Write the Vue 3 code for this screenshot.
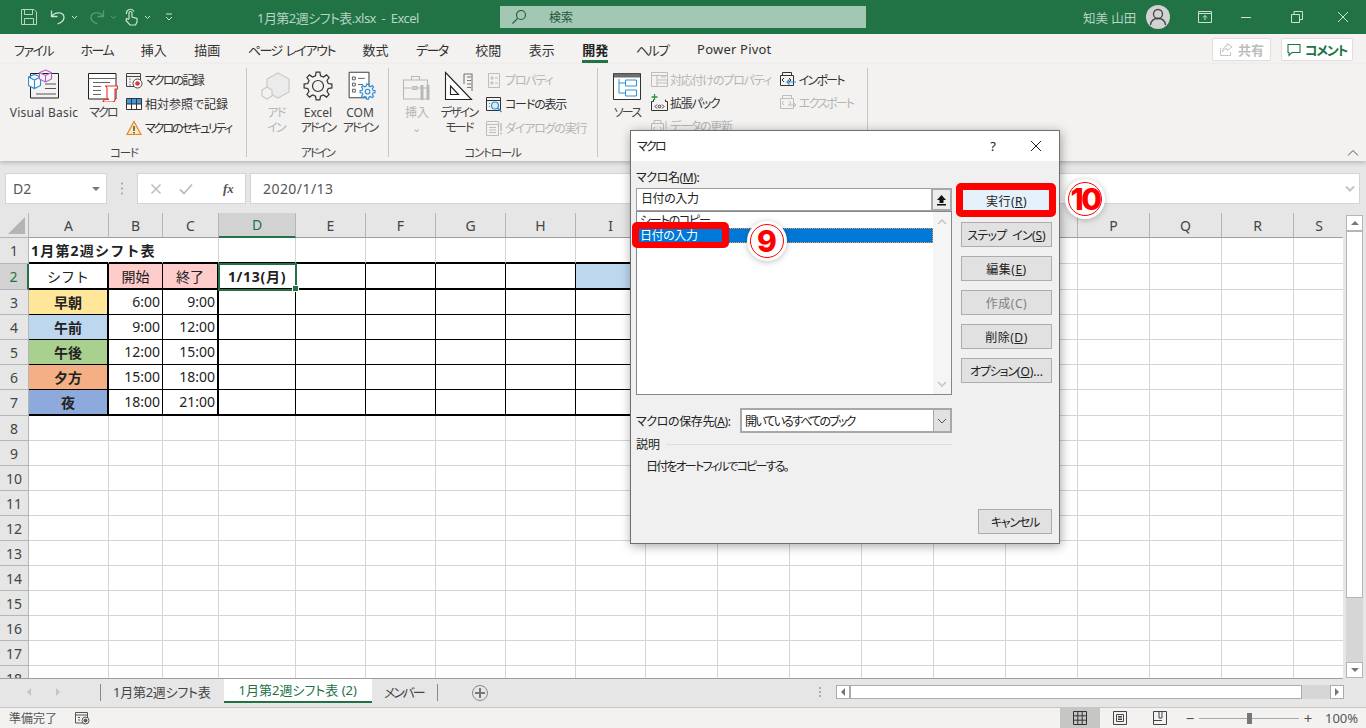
<template>
  <div class="app">
    <!-- title bar -->
    <header class="titlebar">
      <div class="qat">
        <svg class="ic-save" width="18" height="18" viewBox="0 0 18 18" fill="none" stroke="#b9d5c5"><path d="M1.500 1.500h12.500l2.500 2.500v12.500h-15z" /><path d="M4.500 1.500v5h8v-5M4.500 16.500v-6h9v6" /></svg>
        <svg class="ic-undo" width="16" height="18" viewBox="0 0 16 18" fill="none" stroke="#cfe2d7" stroke-width="1.300"><path d="M1.500 2.500v6h6M2 8C5 3.500 14 3.500 14 9.500c0 3-2.500 5-6.500 6.500" /></svg>
        <svg class="caret" width="7" height="5" viewBox="0 0 7 5" fill="none" stroke="#cfe2d7"><path d="M1 1l2.500 2.500L6 1" /></svg>
        <svg class="ic-redo" width="16" height="18" viewBox="0 0 16 18" fill="none" stroke="#5b9a78" stroke-width="1.300"><path d="M14.500 2.500v6h-6M14 8C11 3.500 2 3.500 2 9.500c0 3 2.500 5 6.500 6.500" /></svg>
        <svg class="caret" width="7" height="5" viewBox="0 0 7 5" fill="none" stroke="#5b9a78"><path d="M1 1l2.500 2.500L6 1" /></svg>
        <svg class="ic-touch" width="15" height="18" viewBox="0 0 15 18" fill="none" stroke="#cfe2d7" stroke-width="1.200"><path d="M5 11V5a1.500 1.500 0 0 1 3 0v4l5 1.500V14l-1.500 3H6L2 12.500l.5-2L5 11.500" /><path d="M2.500 6a4 4 0 0 1 7.500-2.500" /></svg>
        <svg class="caret" width="7" height="5" viewBox="0 0 7 5" fill="none" stroke="#cfe2d7"><path d="M1 1l2.500 2.500L6 1" /></svg>
        <svg class="ic-more" width="8" height="9" viewBox="0 0 8 9" fill="none" stroke="#cfe2d7"><path d="M1 1h6M1 4l3 3 3-3" /></svg>
      </div>
      <div class="doc-title">1月第2週シフト表.xlsx&nbsp; - &nbsp;Excel</div>
      <div class="search">
        <svg width="16" height="16" viewBox="0 0 16 16" fill="none" stroke="#24563b" stroke-width="1.100"><circle cx="10" cy="6" r="4.500" /><path d="M6.700 9.300L1.500 14.500" /></svg>
        <span>検索</span>
      </div>
      <div class="user">知美 山田</div>
      <div class="avatar">
        <svg width="24" height="24" viewBox="0 0 24 24" fill="none" stroke="#444" stroke-width="1.300"><circle cx="12" cy="9" r="4.500" /><path d="M4.500 20c.5-4.500 3.500-6.500 7.500-6.500s7 2 7.500 6.500" /></svg>
      </div>
      <svg class="win w1" width="14" height="12" viewBox="0 0 14 12" fill="none" stroke="#cfe2d7"><path d="M.5 2.500V.5h13v2zM.5 2.500v9h13v-9M7 9V4.500M5 6.500l2-2 2 2" /></svg>
      <svg class="win w2" width="12" height="12" viewBox="0 0 12 12" fill="none" stroke="#cfe2d7"><path d="M1 6.500h10" /></svg>
      <svg class="win w3" width="12" height="12" viewBox="0 0 12 12" fill="none" stroke="#cfe2d7"><path d="M.5 3.500h8v8h-8zM3 3.500v-3h8.500v8h-3" /></svg>
      <svg class="win w4" width="12" height="12" viewBox="0 0 12 12" fill="none" stroke="#cfe2d7"><path d="M1 1l10 10M11 1L1 11" /></svg>
    </header>

    <!-- ribbon tabs -->
    <nav class="tabs">
      <span
        v-for="t in tabs"
        :key="t"
        class="tab"
        :class="{ on: t === '開発', kana: isKana(t), latin: t === 'Power Pivot' }"
      >{{ t }}</span>
      <div class="tab-right">
        <button class="pill share">
          <svg width="15" height="15" viewBox="0 0 15 15" fill="none" stroke="#c4c4c4"><path d="M1.500 6v7.500h10V10M8 1.500l5 3.500-5 3.500V6.500C5.500 6.500 4 8 3.500 10c0-3.500 1.500-5.500 4.500-6z" /></svg>
          共有
        </button>
        <button class="pill comment">
          <svg width="14" height="14" viewBox="0 0 14 14" fill="none" stroke="#217346" stroke-width="1.100"><path d="M1 1.500h12v8H5l-3 3v-3H1z" /></svg>
          <span class="k1">コメント</span>
        </button>
      </div>
    </nav>

    <!-- ribbon -->
    <section class="ribbon">
      <div class="group g-code">
        <div class="gbody">
          <div class="big vb">
            <svg width="32" height="34" viewBox="0 0 32 34" fill="none">
              <path d="M2.500 5.500h28v24.500h-28z" fill="#f3f2f1" stroke="#222" />
              <path d="M17 16h11M17 20.500h11M8 26h20" stroke="#555" />
              <path d="M6.500 6.500l6 2.500v8.500l-6 3-6-3V9zM.5 9l6 3 6-3M6.500 12v8.500" fill="#fff" stroke="#2e8fd8" stroke-width="1.200" />
              <path d="M17.500 2l6 2.500V11l-6 3-6-3V4.500zM11.500 4.500l6 3 6-3M17.500 7.500V14" fill="#f3f2f1" stroke="#b25dc6" stroke-width="1.100" />
            </svg>
            <span>Visual Basic</span>
          </div>
          <div class="big macro">
            <svg width="30" height="34" viewBox="0 0 30 34" fill="none">
              <path d="M.5 5.500h27.500v25.500H.5z" fill="#fff" stroke="#222" />
              <path d="M.5 10.500h27.500M5 14.500h17M5 18.500h8M5 22.500h8M5 26.500h8" stroke="#666" />
              <path d="M17 18h12.500v3H27v10.500c0 1.500-1 2.500-2.500 2.500H14.500c1-.5 1.500-1.500 1.500-2.500h5M17 18c1.500 0 2 1.500 2 3v10" fill="#fff" stroke="#e8322f" stroke-width="1.100" />
            </svg>
            <span class="k2">マクロ</span>
          </div>
          <div class="smalls s-code">
            <div class="small">
              <svg width="17" height="17" viewBox="0 0 17 17" fill="none"><path d="M.5 1.500h14v13H.5zM.5 4.500h14" stroke="#444" /><path d="M3 7h2M3 10h2M3 13h2" stroke="#888" /><circle cx="11.500" cy="11.500" r="4.500" fill="#fff" stroke="#444" /><circle cx="11.500" cy="11.500" r="2.300" fill="#e8322f" /></svg>
              <span class="k2">マクロの記録</span>
            </div>
            <div class="small">
              <svg width="17" height="16" viewBox="0 0 17 16" fill="none"><path d="M.5 2.500h15v11H.5z" fill="#fff" stroke="#333" /><path d="M1 3h14v5H1z" fill="#3f97dc" /><path d="M5.500 2.500v11M10.500 2.500v11M.5 8h15" stroke="#333" /></svg>
              <span>相対参照で記録</span>
            </div>
            <div class="small">
              <svg width="17" height="16" viewBox="0 0 17 16" fill="none"><path d="M8 1.500l7 13H1z" fill="#fbe7c4" stroke="#e08a1e" stroke-width="1.200" /><path d="M8 6v5M8 12v1.500" stroke="#333" stroke-width="1.300" /></svg>
              <span class="k3">マクロのセキュリティ</span>
            </div>
          </div>
        </div>
        <div class="glabel k1">コード</div>
      </div>

      <div class="group g-addin">
        <div class="gbody">
          <div class="big dis w42">
            <svg width="30" height="34" viewBox="0 0 30 34" fill="none" stroke="#c8c8c8" stroke-width="1.200"><path d="M17 5l11 6v13l-11 6-11-6V11z" fill="#ebebeb" /><path d="M6 19l5 3v6l-5 3-5-3v-6z" fill="#f3f2f1" /></svg>
            <span class="k2">アド<br />イン</span>
          </div>
          <div class="big w42">
            <svg width="30" height="34" viewBox="0 0 30 34" fill="none" stroke="#333" stroke-width="1.200"><path :d="gear(15, 18, 14, 10.500, 8)" /><circle cx="15" cy="18" r="5.500" /></svg>
            <span>Excel<br /><em class="k2">アドイン</em></span>
          </div>
          <div class="big w42">
            <svg width="32" height="36" viewBox="0 0 32 36" fill="none">
              <path d="M4.500 4.500h21v27h-21z" fill="#fff" stroke="#333" />
              <path d="M8 9.500h3v3H8zM8 16h3v3H8zM8 22.500h3v3H8z" stroke="#555" />
              <path d="M14 11h7M14 17.500h5" stroke="#555" />
              <path :d="gear(24, 25, 8, 6, 8)" fill="#f3f2f1" stroke="#2e8fd8" stroke-width="1.200" />
              <circle cx="24" cy="25" r="2.500" stroke="#2e8fd8" stroke-width="1.200" />
            </svg>
            <span>COM<br /><em class="k2">アドイン</em></span>
          </div>
        </div>
        <div class="glabel k2">アドイン</div>
      </div>

      <div class="group g-ctrl">
        <div class="gbody">
          <div class="big dis w42">
            <svg width="30" height="34" viewBox="0 0 30 34" fill="none" stroke="#b8b8b8" stroke-width="1.100"><path d="M1.500 12h24v19h-24zM9.500 12V8.500h8V12M1.500 20h24M11 18.500h4v3h-4z" /><path d="M20 17v15M26 17v15" stroke-width="3" /></svg>
            <span>挿入<br /><i class="chev">⌄</i></span>
          </div>
          <div class="big w42">
            <svg width="30" height="34" viewBox="0 0 30 34" fill="none" stroke="#222" stroke-width="1.100"><path d="M1.500 4.500l26 27h-26z" fill="#fff" /><path d="M6.500 18l8 8.500h-8z" /><path d="M20 6h8v17" stroke="#777" /><path d="M20 6v10M23 9h4M23 12.500h4M23 16h4M23 19.500h4" stroke="#777" /></svg>
            <span class="k2">デザイン<br />モード</span>
          </div>
          <div class="smalls s-ctrl">
            <div class="small dis">
              <svg width="17" height="17" viewBox="0 0 17 17" fill="none" stroke="#bdbdbd"><path d="M2.500 1.500h11v14h-11zM5 5h2v2H5zM9 6h3M5 10h2v2H5zM9 11h3" /></svg>
              <span class="k1">プロパティ</span>
            </div>
            <div class="small">
              <svg width="17" height="17" viewBox="0 0 17 17" fill="none"><path d="M.5 1.500h14v13H.5zM.5 4.500h14" stroke="#333" /><circle cx="9" cy="9.500" r="3.500" fill="#d8ebf8" stroke="#2e8fd8" stroke-width="1.200" /><path d="M11.500 12l4 4" stroke="#2e8fd8" stroke-width="1.500" /><path d="M3 7.500h1M3 10.500h1" stroke="#777" /></svg>
              <span class="k1">コードの表示</span>
            </div>
            <div class="small dis">
              <svg width="17" height="17" viewBox="0 0 17 17" fill="none" stroke="#bdbdbd"><path d="M.5 1.500h12v14H.5zM.5 4.500h12M3 7.500h7M3 10h7M3 12.500h7" /><path d="M15 3v8M15 12.500v2" stroke-width="1.500" /></svg>
              <span class="k1">ダイアログの実行</span>
            </div>
          </div>
        </div>
        <div class="glabel k1">コントロール</div>
      </div>

      <div class="group g-xml">
        <div class="gbody">
          <div class="big w42">
            <svg width="30" height="34" viewBox="0 0 30 34" fill="none"><path d="M1.500 5.500h27v26h-27z" fill="#fff" stroke="#333" /><path d="M2 5.500h26v4H2z" fill="#6d6d6d" /><path d="M13.500 12h11v6h-11zM13.500 22h11v6h-11zM7 11v14h6.500M7 15h6.500" stroke="#2e8fd8" fill="none" /></svg>
            <span class="k2">ソース</span>
          </div>
          <div class="smalls s-xml">
            <div class="small tight dis">
              <svg width="17" height="17" viewBox="0 0 17 17" fill="none" stroke="#bdbdbd"><path d="M.5 1.500h16v14H.5zM.5 4.500h16M6 4.500v11M6 9h10.500M6 12h10.500M10 6h5" /></svg>
              <span class="k1">対応付けのプロパティ</span>
            </div>
            <div class="small tight">
              <svg width="17" height="18" viewBox="0 0 17 18" fill="none"><path d="M2.500 5.500v2h-2v9h16v-9h-2v-2" stroke="#333" /><path d="M6 10.500l-2 2 2 2M11 10.500l2 2-2 2" stroke="#333" /><circle cx="8.500" cy="12.500" r="1.300" stroke="#333" /><path d="M3.500 0v6M.5 3h6" stroke="#1f9a3c" stroke-width="1.300" /></svg>
              <span class="k1">拡張パック</span>
            </div>
            <div class="small tight dis">
              <svg width="17" height="17" viewBox="0 0 17 17" fill="none" stroke="#bdbdbd"><path d="M.5 6.500h12v10H.5zM3 6.500v-3h7v3M4 10l-1.500 1.500L4 13M9 10l1.500 1.500L9 13M15 4v8M15 13v2" /></svg>
              <span class="k1">データの更新</span>
            </div>
          </div>
          <div class="smalls s-io">
            <div class="small tight">
              <svg width="17" height="17" viewBox="0 0 17 17" fill="none"><path d="M2.500 4V1.500h9V4M.5 4.500h13v10H.5z" stroke="#333" /><path d="M4 7l-2 2 2 2M9 7l2 2-2 2" stroke="#333" /><path d="M16 11H7M9.500 8.500L7 11l2.500 2.500" stroke="#2e8fd8" stroke-width="1.200" /></svg>
              <span class="k2">インポート</span>
            </div>
            <div class="small tight dis">
              <svg width="17" height="17" viewBox="0 0 17 17" fill="none" stroke="#bdbdbd"><path d="M2.500 4V1.500h9V4M.5 4.500h13v10H.5zM4 7l-2 2 2 2M9 7l2 2-2 2M8 11h8M13.500 8.500L16 11l-2.500 2.500" /></svg>
              <span class="k2">エクスポート</span>
            </div>
          </div>
        </div>
        <div class="glabel">XML</div>
      </div>
      <svg class="collapse" width="12" height="8" viewBox="0 0 12 8" fill="none" stroke="#555"><path d="M1 6.500l5-5 5 5" /></svg>
    </section>

    <!-- formula bar -->
    <div class="fbar">
      <div class="namebox"><span>D2</span><i class="tri"></i></div>
      <div class="fdots"></div>
      <div class="fbtns">
        <svg width="12" height="12" viewBox="0 0 12 12" fill="none" stroke="#bdbdbd" stroke-width="1.500"><path d="M1.500 1.500l9 9M10.500 1.500l-9 9" /></svg>
        <svg width="14" height="12" viewBox="0 0 14 12" fill="none" stroke="#bdbdbd" stroke-width="1.800"><path d="M1 6.500l4 4 8-9" /></svg>
        <span class="fx">fx</span>
      </div>
      <div class="finput">
        <span>2020/1/13</span>
        <svg width="10" height="7" viewBox="0 0 10 7" fill="none" stroke="#c4c4c4" stroke-width="2"><path d="M1 1.500l4 4 4-4" /></svg>
      </div>
    </div>

    <!-- sheet -->
    <div class="sheet-wrap">
      <div class="sheet" :style="{ gridTemplateColumns: gridCols }">
        <div class="corner"><i></i></div>
        <div v-for="c in cols" :key="c.l" class="chead" :class="{ sel: c.l === 'D' }">{{ c.l }}</div>
        <template v-for="r in rows" :key="r">
          <div class="rhead" :class="{ sel: r === 2 }">{{ r }}</div>
          <div
            v-for="c in cols"
            :key="c.l"
            class="cell"
            :class="cellClass(r, c.l)"
            :style="cellFill(r, c.l)"
          >
            {{ cellText(r, c.l) }}
            <i v-if="r === 2 && c.l === 'D'" class="handle"></i>
          </div>
        </template>
      </div>
      <div class="vscroll">
        <button class="sbtn"><i class="up"></i></button>
        <div class="vtrack"><div class="vthumb"></div></div>
        <button class="sbtn"><i class="down"></i></button>
      </div>
    </div>

    <!-- sheet tabs -->
    <div class="sheetbar">
      <span class="arrow l"></span>
      <span class="arrow r"></span>
      <div class="stabs">
        <div class="stab">1月第2週シフト表</div>
        <div class="stab active">1月第2週シフト表 (2)</div>
        <div class="stab k3">メンバー</div>
      </div>
      <div class="addsheet">
        <svg width="10" height="10" viewBox="0 0 10 10" fill="none" stroke="#777" stroke-width="2"><path d="M5 0v10M0 5h10" /></svg>
      </div>
      <div class="hdots"></div>
      <div class="hscroll">
        <button class="hbtn"><i class="left"></i></button>
        <div class="htrack"></div>
        <div class="hrest"></div>
        <button class="hbtn"><i class="right"></i></button>
      </div>
    </div>

    <!-- status bar -->
    <footer class="status">
      <span class="ready">準備完了</span>
      <svg width="15" height="14" viewBox="0 0 15 14" fill="none" stroke="#555"><path d="M.5 1.500h12V12H.5zM.5 4h12M3 6.500h2M3 9h2" /><circle cx="10.500" cy="9.500" r="3.500" fill="#f3f2f1" /><circle cx="10.500" cy="9.500" r="1.500" fill="#555" /></svg>
      <div class="views">
        <div class="view on"><svg width="14" height="14" viewBox="0 0 14 14" fill="none" stroke="#333"><path d="M.5.500h13v13H.5zM.5 4.800h13M.5 9.200h13M4.800.5v13M9.200.5v13" /></svg></div>
        <div class="view"><svg width="14" height="14" viewBox="0 0 14 14" fill="none" stroke="#444"><path d="M.5.500h13v13H.5zM3.500 3.500h7v7h-7zM5 5.500h4M5 7h4M5 8.500h4" /></svg></div>
        <div class="view"><svg width="14" height="14" viewBox="0 0 14 14" fill="none" stroke="#444"><path d="M.5.500h13v13H.5zM6 .5v6.500h3V.5M.5 9.500H9" /></svg></div>
      </div>
      <div class="zoom">
        <span class="zbtn">−</span>
        <div class="slider"><i></i></div>
        <span class="zbtn">+</span>
      </div>
      <span class="pct">100%</span>
    </footer>

    <!-- macro dialog -->
    <div class="dialog">
      <div class="dtitle">
        <span class="k2">マクロ</span>
        <span class="q">?</span>
        <svg width="12" height="12" viewBox="0 0 12 12" fill="none" stroke="#222"><path d="M1 1l10 10M11 1L1 11" /></svg>
      </div>
      <div class="dbody">
        <div class="dleft">
          <div class="lbl">マクロ名(<u>M</u>):</div>
          <div class="dinput">
            <span>日付の入力</span>
            <div class="refbtn"><svg width="11" height="12" viewBox="0 0 11 12"><path d="M5.500 1L10 6H7.500v3h-4V6H1zM1 10h9v1.500H1z" fill="#111" /></svg></div>
          </div>
          <div class="dlist">
            <div class="items">
              <div class="item k1">シートのコピー</div>
              <div class="item picked">日付の入力</div>
            </div>
            <div class="lscroll">
              <svg width="10" height="6" viewBox="0 0 10 6" fill="none" stroke="#c4c4c4" stroke-width="1.500"><path d="M1 5l4-4 4 4" /></svg>
              <svg width="10" height="6" viewBox="0 0 10 6" fill="none" stroke="#c4c4c4" stroke-width="1.500"><path d="M1 1l4 4 4-4" /></svg>
            </div>
          </div>
          <div class="saverow">
            <span class="savelbl">マクロの保存先(<u>A</u>):</span>
            <div class="dselect">
              <span class="k2">開いているすべてのブック</span>
              <div class="selbtn"><svg width="10" height="6" viewBox="0 0 10 6" fill="none" stroke="#555"><path d="M1 1l4 4 4-4" /></svg></div>
            </div>
          </div>
          <div class="descrow"><span>説明</span><i></i></div>
          <div class="desc k2">日付をオートフィルでコピーする。</div>
        </div>
        <div class="dright">
          <button class="dbtn run wide">実行(<u>R</u>)</button>
          <button class="dbtn"><span class="k0 step">ステップ イン</span>(<u>S</u>)</button>
          <button class="dbtn wide">編集(<u>E</u>)</button>
          <button class="dbtn off wide">作成(C)</button>
          <button class="dbtn wide">削除(<u>D</u>)</button>
          <button class="dbtn"><span class="k1">オプション</span>(<u>O</u>)...</button>
          <button class="dbtn cancel"><span class="k1">キャンセル</span></button>
        </div>
      </div>
      <div class="redbox rb-run"></div>
      <div class="redbox rb-item"></div>
      <div class="badge b9"><span>9</span></div>
      <div class="badge b10"><span>10</span></div>
    </div>
  </div>
</template>

<script setup>
const tabs = [
  "ファイル",
  "ホーム",
  "挿入",
  "描画",
  "ページ レイアウト",
  "数式",
  "データ",
  "校閲",
  "表示",
  "開発",
  "ヘルプ",
  "Power Pivot",
];

const widths = [80, 54, 56, 77, 70, 70, 70, 70, 70, 72, 72, 72, 72, 72, 72, 72, 72, 72, 51];
const cols = widths.map((w, i) => ({ l: String.fromCharCode(65 + i), w }));
const gridCols = "29px " + widths.map((w) => w + "px").join(" ");
const rows = Array.from({ length: 18 }, (_, i) => i + 1);

const texts = {
  A1: "1月第2週シフト表",
  A2: "シフト",
  B2: "開始",
  C2: "終了",
  D2: "1/13(月)",
  A3: "早朝",
  A4: "午前",
  A5: "午後",
  A6: "夕方",
  A7: "夜",
  B3: "6:00",
  C3: "9:00",
  B4: "9:00",
  C4: "12:00",
  B5: "12:00",
  C5: "15:00",
  B6: "15:00",
  C6: "18:00",
  B7: "18:00",
  C7: "21:00",
};

const fills = {
  B2: "#ffcccc",
  C2: "#ffcccc",
  I2: "#bdd7ee",
  A3: "#ffe699",
  A4: "#bdd7ee",
  A5: "#a9d08e",
  A6: "#f4b084",
  A7: "#8ea9db",
};

function isKana(t) {
  return /[ァ-ヶ]/.test(t);
}

function cellText(r, c) {
  return texts[c + r] || "";
}

function cellFill(r, c) {
  return fills[c + r] ? { background: fills[c + r] } : null;
}

function cellClass(r, c) {
  const inTable = "ABCDEFGHI".includes(c);
  return {
    title: c === "A" && r === 1,
    nr: r === 1 && (c === "A" || c === "B"),
    tb: inTable && r >= 2 && r <= 7,
    thickB: inTable && (r === 1 || r === 2 || r === 7),
    thickR: r >= 2 && r <= 7 && (c === "A" || c === "C"),
    center: r === 2 || c === "A",
    strong: (c === "A" && r >= 3 && r <= 7) || (c === "D" && r === 2),
    num: r >= 3 && (c === "B" || c === "C"),
    active: r === 2 && c === "D",
    edge: c === "S",
  };
}

function gear(cx, cy, ro, ri, n) {
  const pts = [];
  const step = (Math.PI * 2) / n;
  for (let i = 0; i < n; i++) {
    const a = i * step - Math.PI / 2;
    const w = step * 0.17;
    const v = step * 0.3;
    pts.push([ri, a - v], [ro, a - w], [ro, a + w], [ri, a + v]);
  }
  return (
    pts
      .map(([r, a], i) => {
        const x = (cx + r * Math.cos(a)).toFixed(1);
        const y = (cy + r * Math.sin(a)).toFixed(1);
        return (i ? "L" : "M") + x + " " + y;
      })
      .join("") + "z"
  );
}
</script>

<style>
html,
body {
  margin: 0;
  background: #e6e6e6;
}
</style>

<style scoped>
.app {
  position: relative;
  width: 1366px;
  height: 728px;
  overflow: hidden;
  display: flex;
  flex-direction: column;
  font-family: "Noto Sans", "Noto Sans CJK JP", sans-serif;
  font-feature-settings: "palt";
  font-size: 12px;
  color: #333;
  background: #e6e6e6;
}

button {
  font: inherit;
  font-feature-settings: inherit;
  padding: 0;
}

em {
  font-style: normal;
}

/* kana in the reference's UI font runs narrower than Noto */
.k0 {
  letter-spacing: -0.7px;
}

.k1 {
  letter-spacing: -1.2px;
}

.k2 {
  letter-spacing: -1.8px;
}

.k3 {
  letter-spacing: -2.1px;
}

/* title bar */
.titlebar {
  position: relative;
  flex: none;
  height: 34px;
  background: #217346;
  color: #b8d4c4;
  display: flex;
  align-items: center;
}

.qat {
  display: flex;
  align-items: center;
  width: 257px;
  padding-left: 20px;
  box-sizing: border-box;
}

.ic-undo {
  margin-left: 12px;
}

.caret {
  margin-left: 5px;
}

.ic-redo {
  margin-left: 11px;
}

.ic-touch {
  margin-left: 7px;
}

.ic-more {
  margin-left: 14px;
}

.doc-title {
  width: 243px;
  font-size: 13px;
  white-space: nowrap;
  letter-spacing: -0.55px;
}

.search {
  width: 366px;
  height: 22px;
  background: #a2c7b3;
  display: flex;
  align-items: center;
  gap: 22px;
  padding-left: 11px;
  box-sizing: border-box;
  color: #24563b;
}

.user {
  margin-left: 217px;
  font-size: 12.500px;
}

.avatar {
  position: absolute;
  left: 1146px;
  top: 5px;
  width: 24px;
  height: 24px;
  border-radius: 50%;
  background: #d2d2d2;
}

.win {
  position: absolute;
  top: 11px;
}

.w1 {
  left: 1198px;
}
.w2 {
  left: 1240px;
}
.w3 {
  left: 1291px;
}
.w4 {
  left: 1337px;
}

/* tabs */
.tabs {
  flex: none;
  height: 30px;
  background: #f3f2f1;
  display: flex;
  align-items: center;
  padding-left: 14px;
  gap: 27.500px;
  position: relative;
  font-size: 13px;
}

.tab {
  position: relative;
  color: #333;
  white-space: nowrap;
}

.tab.kana {
  letter-spacing: -1.5px;
  word-spacing: 2px;
}

.tab.latin {
  letter-spacing: 0.2px;
  margin-left: 1px;
}

.tab.on {
  font-weight: 700;
  color: #222;
}

.tab.on::after {
  content: "";
  position: absolute;
  left: 0;
  right: 0;
  bottom: -4px;
  height: 3px;
  background: #217346;
}

.tab-right {
  position: absolute;
  right: 13px;
  top: 4px;
  display: flex;
  gap: 10px;
}

.pill {
  height: 23px;
  display: flex;
  align-items: center;
  justify-content: center;
  gap: 4px;
  background: #fff;
  border: 1px solid #e1dfdd;
  border-radius: 2px;
  font-weight: 700;
}

.share {
  width: 59px;
  color: #bdbdbd;
}

.comment {
  width: 72px;
  color: #217346;
}

/* ribbon */
.ribbon {
  position: relative;
  z-index: 2;
  flex: none;
  height: 97px;
  box-sizing: border-box;
  padding-top: 4px;
  background: #f3f2f1;
  box-shadow: 0 2px 4px rgba(0, 0, 0, 0.2);
  display: flex;
  align-items: flex-start;
}

.group {
  flex: none;
  height: 89px;
  box-sizing: border-box;
  border-right: 1px solid #c8c6c4;
  display: flex;
  flex-direction: column;
}

.g-code {
  width: 247px;
  padding-left: 10px;
}

.g-addin {
  width: 142px;
  padding-left: 8px;
}

.g-ctrl {
  width: 209px;
  padding-left: 7px;
}

.g-xml {
  width: 270px;
  padding-left: 8px;
}

.gbody {
  height: 76px;
  display: flex;
}

.glabel {
  height: 13px;
  line-height: 17px;
  text-align: center;
  color: #444;
  font-size: 11.500px;
  padding-right: 8px;
}

.big {
  flex: none;
  display: flex;
  flex-direction: column;
  align-items: center;
  text-align: center;
  line-height: 15px;
  white-space: nowrap;
  color: #444;
}

.big svg {
  flex: none;
  height: 34px;
  margin-bottom: 3px;
}

.big.vb {
  width: 68px;
  letter-spacing: 0.25px;
}

.big.macro {
  width: 30px;
  margin-left: 10px;
}

.w42 {
  width: 42px;
}

.dis,
.dis span {
  color: #b5b5b5;
}

.chev {
  font-style: normal;
  font-size: 11px;
}

.smalls {
  flex: none;
  display: flex;
  flex-direction: column;
}

.s-code {
  margin-left: 8px;
}

.s-ctrl {
  margin-left: 6px;
}

.s-xml {
  margin-left: 3px;
}

.s-io {
  margin-left: 9px;
}

.small {
  height: 24px;
  display: flex;
  align-items: center;
  gap: 2px;
  white-space: nowrap;
}

.small.tight {
  height: 23px;
}

.small svg {
  flex: none;
}

.collapse {
  position: absolute;
  right: 7px;
  bottom: 4px;
}

/* formula bar */
.fbar {
  flex: none;
  height: 52px;
  box-sizing: border-box;
  padding: 12px 6px 9px 5px;
  display: flex;
  background: #e6e6e6;
}

.namebox {
  width: 102px;
  box-sizing: border-box;
  background: #fff;
  border: 1px solid #d4d4d4;
  display: flex;
  align-items: center;
  justify-content: space-between;
  padding: 0 6px 0 7px;
  font-size: 14px;
  color: #555;
}

.tri {
  width: 0;
  height: 0;
  border: 4px solid transparent;
  border-top: 4px solid #777;
  border-bottom: 0;
}

.fdots {
  width: 30px;
  background: radial-gradient(circle, #aaa 1px, transparent 1.200px) center / 2px 5px repeat-y;
  margin: 9px 0;
}

.fbtns {
  width: 109px;
  box-sizing: border-box;
  background: #fff;
  border: 1px solid #d4d4d4;
  display: flex;
  align-items: center;
  gap: 17px;
  padding-left: 12px;
}

.fx {
  font-family: "Liberation Serif", serif;
  font-style: italic;
  font-weight: 700;
  font-size: 13px;
  margin-left: 13px;
  color: #555;
}

.finput {
  flex: 1;
  margin-left: 4px;
  background: #fff;
  border: 1px solid #d4d4d4;
  display: flex;
  align-items: center;
  justify-content: space-between;
  padding: 0 4px 0 12px;
  font-size: 14px;
  letter-spacing: 0.45px;
  color: #555;
}

/* sheet */
.sheet-wrap {
  flex: none;
  height: 466px;
  display: flex;
  background: #e6e6e6;
}

.sheet {
  width: 1345px;
  height: 465px;
  overflow: hidden;
  display: grid;
  grid-auto-rows: 25px;
  grid-template-rows: 25px 26px 26px 25px 25px 25px 25px 26px;
  background: #fff;
  border-bottom: 1px solid #9e9e9e;
  font-size: 14px;
  font-feature-settings: normal;
}

.corner {
  position: relative;
  background: #e6e6e6;
  border-right: 1px solid #b5b5b5;
  border-bottom: 1px solid #b5b5b5;
  box-sizing: border-box;
}

.corner i {
  position: absolute;
  right: 3px;
  bottom: 3px;
  width: 0;
  height: 0;
  border-left: 17px solid transparent;
  border-bottom: 17px solid #b4b4b4;
}

.chead,
.rhead {
  display: flex;
  align-items: center;
  justify-content: center;
  box-sizing: border-box;
  background: #e6e6e6;
  color: #444;
}

.chead {
  border-right: 1px solid #b5b5b5;
  border-bottom: 1px solid #9e9e9e;
}

.chead:nth-child(20) {
  border-right-color: transparent;
}

.rhead {
  border-right: 1px solid #b5b5b5;
  border-bottom: 1px solid #b5b5b5;
}

.chead.sel {
  background: #d2d2d2;
  color: #217346;
  border-bottom: 2px solid #217346;
}

.rhead.sel {
  background: #d2d2d2;
  color: #217346;
  border-right: 2px solid #217346;
}

.cell {
  position: relative;
  box-sizing: border-box;
  border-right: 1px solid #d4d4d4;
  border-bottom: 1px solid #d4d4d4;
  display: flex;
  align-items: center;
  padding: 0 2px 1px;
  white-space: nowrap;
  color: #222;
}

.cell.edge {
  border-right: 2px solid #9e9e9e;
}

.cell.tb {
  border-right-color: #000;
  border-bottom-color: #000;
}

.cell.nr {
  border-right-color: transparent;
}

.cell.thickB {
  border-bottom: 2px solid #000;
}

.cell.thickR {
  border-right: 2px solid #000;
}

.cell.center {
  justify-content: center;
}

.cell.title {
  justify-content: flex-start;
  font-weight: 700;
  letter-spacing: 1.2px;
  overflow: visible;
  z-index: 1;
}

.cell.strong {
  font-weight: 700;
}

.cell.active {
  letter-spacing: 0.7px;
  outline: 2px solid #217346;
  outline-offset: -1px;
  z-index: 2;
}

.cell.num {
  justify-content: flex-end;
}

.handle {
  position: absolute;
  right: -4px;
  bottom: -4px;
  width: 5px;
  height: 5px;
  background: #217346;
  border: 1px solid #fff;
}

.vscroll {
  flex: 1;
  box-sizing: border-box;
  padding: 2px 3px 1px 3px;
  display: flex;
  flex-direction: column;
}

.sbtn {
  flex: none;
  width: 15px;
  height: 14px;
  box-sizing: content-box;
  background: #fff;
  border: 1px solid #b5b5b5;
  display: flex;
  align-items: center;
  justify-content: center;
}

.vtrack {
  flex: 1;
  width: 17px;
  background: #d6d6d6;
}

.vthumb {
  height: 367px;
  box-sizing: border-box;
  background: #fff;
  border: 1px solid #b5b5b5;
}

.up,
.down,
.left,
.right {
  width: 0;
  height: 0;
  border: 4px solid transparent;
}

.up {
  border-bottom: 4px solid #777;
  border-top: 0;
}

.down {
  border-top: 4px solid #777;
  border-bottom: 0;
}

.left {
  border-right: 4px solid #777;
  border-left: 0;
}

.right {
  border-left: 4px solid #777;
  border-right: 0;
}

/* sheet tabs */
.sheetbar {
  flex: none;
  height: 28px;
  display: flex;
  align-items: flex-start;
  background: #e6e6e6;
  border-bottom: 1px solid #c6c6c6;
  position: relative;
}

.arrow {
  width: 0;
  height: 0;
  margin-top: 9px;
  border: 4px solid transparent;
}

.arrow.l {
  margin-left: 27px;
  border-right: 4px solid #c4c4c4;
  border-left: 0;
}

.arrow.r {
  margin-left: 25px;
  border-left: 4px solid #c4c4c4;
  border-right: 0;
}

.stabs {
  display: flex;
  margin-left: 40px;
  border-left: 1px solid #888;
  border-right: 1px solid #888;
  height: 17px;
  margin-top: 5px;
  align-items: center;
  font-size: 13px;
}

.stab {
  height: 17px;
  line-height: 17px;
  padding: 0 13px 0 12px;
  color: #444;
  white-space: nowrap;
}

.stab:first-child {
  letter-spacing: -0.25px;
}

.stab.active {
  height: 24px;
  line-height: 22px;
  padding: 0 15px;
  background: #fff;
  color: #217346;
  box-sizing: border-box;
  border-bottom: 2px solid #217346;
  align-self: flex-start;
  margin-top: -5px;
}

.addsheet {
  width: 16px;
  height: 16px;
  box-sizing: border-box;
  margin: 6px 0 0 34px;
  border: 1px solid #888;
  border-radius: 50%;
  display: flex;
  align-items: center;
  justify-content: center;
}

.hdots {
  position: absolute;
  left: 819px;
  top: 8px;
  width: 2px;
  height: 12px;
  background: repeating-linear-gradient(#aaa 0 2px, transparent 2px 4px);
}

.hscroll {
  position: absolute;
  left: 836px;
  top: 6px;
  width: 508px;
  height: 14px;
  display: flex;
  background: #d6d6d6;
}

.hbtn {
  flex: none;
  width: 14px;
  height: 14px;
  box-sizing: border-box;
  background: #fff;
  border: 1px solid #ababab;
  display: flex;
  align-items: center;
  justify-content: center;
}

.htrack {
  width: 452px;
  box-sizing: border-box;
  background: #fff;
  border: 1px solid #ababab;
}

.hrest {
  flex: 1;
}

/* status */
.status {
  flex: 1;
  position: relative;
  display: flex;
  align-items: center;
  background: #f3f2f1;
  color: #555;
}

.ready {
  margin-left: 9px;
  width: 66px;
}

.views {
  position: absolute;
  left: 1060px;
  top: 0;
  bottom: 0;
  display: flex;
}

.view {
  width: 40px;
  display: flex;
  align-items: center;
  justify-content: center;
}

.view.on {
  background: #c6c6c4;
}

.zoom {
  position: absolute;
  left: 1185px;
  top: 0;
  bottom: 0;
  display: flex;
  align-items: center;
  gap: 4px;
}

.zbtn {
  width: 10px;
  font-size: 15px;
  text-align: center;
}

.slider {
  position: relative;
  width: 100px;
  height: 1px;
  background: #a8a8a8;
}

.slider i {
  position: absolute;
  left: 48px;
  top: -5px;
  width: 5px;
  height: 11px;
  background: #777;
}

.pct {
  position: absolute;
  left: 1325px;
  font-size: 13px;
}

/* dialog */
.dialog {
  position: absolute;
  z-index: 5;
  left: 630px;
  top: 130px;
  width: 430px;
  height: 414px;
  box-sizing: border-box;
  background: #f0f0f0;
  border: 1px solid #6f6f6f;
  box-shadow: 1px 2px 10px rgba(0, 0, 0, 0.35);
  color: #222;
}

.dtitle {
  height: 30px;
  background: #fff;
  display: flex;
  align-items: center;
  padding-left: 6px;
  padding-bottom: 1px;
  box-sizing: border-box;
}

.dtitle .q {
  margin-left: auto;
  font-size: 13px;
  margin-right: 34px;
  letter-spacing: 0;
}

.dtitle svg {
  margin-right: 17px;
}

.dbody {
  display: flex;
  padding: 8px 0 0 5px;
}

.dleft {
  width: 316px;
}

.lbl {
  height: 16px;
  line-height: 18px;
  margin-bottom: 3px;
  letter-spacing: -0.4px;
}

.dinput {
  height: 23px;
  box-sizing: border-box;
  display: flex;
  align-items: center;
  background: #fff;
  border: 1px solid #a0a0a0;
  border-right: 0;
  padding-left: 4px;
}

.dinput span {
  flex: 1;
  letter-spacing: -0.4px;
  margin-top: -3px;
}

.refbtn {
  width: 21px;
  height: 23px;
  margin: -1px 0;
  background: #ececec;
  border: 2px solid #a8a8a8;
  box-sizing: border-box;
  display: flex;
  align-items: center;
  justify-content: center;
}

.dlist {
  height: 184px;
  box-sizing: border-box;
  background: #fff;
  border: 1px solid #828790;
  display: flex;
}

.items {
  flex: 1;
  padding-top: 1px;
}

.item {
  height: 15px;
  line-height: 15px;
  padding-left: 3px;
}

.item.picked {
  background: #0078d7;
  color: #fff;
  outline: 1px dotted #f09a3a;
  outline-offset: -1px;
  letter-spacing: -0.4px;
}

.lscroll {
  width: 18px;
  background: #f5f5f5;
  display: flex;
  flex-direction: column;
  align-items: center;
  justify-content: space-between;
  padding: 7px 0;
  box-sizing: border-box;
}

.saverow {
  margin-top: 13px;
  height: 25px;
  display: flex;
  align-items: center;
}

.savelbl {
  width: 104px;
  white-space: nowrap;
  letter-spacing: -0.4px;
}

.dselect {
  flex: 1;
  height: 25px;
  box-sizing: border-box;
  background: #fff;
  border: 2px solid #a8a8a8;
  display: flex;
  align-items: center;
  padding-left: 3px;
}

.dselect span {
  flex: 1;
}

.selbtn {
  width: 16px;
  height: 21px;
  background: #e1e1e1;
  border-left: 1px solid #a8a8a8;
  display: flex;
  align-items: center;
  justify-content: center;
}

.descrow {
  margin-top: 3px;
  height: 16px;
  display: flex;
  align-items: center;
  gap: 6px;
}

.descrow i {
  flex: 1;
  height: 1px;
  background: #dcdcdc;
}

.desc {
  margin-top: 7px;
  padding-left: 10px;
  line-height: 16px;
}

.dright {
  margin-left: 9px;
  margin-top: 19px;
  width: 91px;
  display: flex;
  flex-direction: column;
  gap: 9px;
  position: relative;
  height: 346px;
}

.dbtn {
  flex: none;
  width: 91px;
  height: 25px;
  box-sizing: border-box;
  background: #e1e1e1;
  border: 1px solid #adadad;
  color: #222;
  white-space: nowrap;
}

.dbtn.wide {
  letter-spacing: 0.5px;
}

.dbtn .step {
  word-spacing: 3px;
}

.dbtn.run {
  background: #e5f1fb;
}

.dbtn.off {
  color: #808080;
}

.dbtn.cancel {
  position: absolute;
  right: 0;
  bottom: 0;
  width: 74px;
}

.redbox {
  position: absolute;
  box-sizing: border-box;
  border: 7px solid #ff0000;
  border-radius: 5px;
}

.rb-run {
  left: 325px;
  top: 52px;
  width: 100px;
  height: 34px;
}

.rb-item {
  left: 1px;
  top: 91px;
  width: 97px;
  height: 26px;
  border-width: 7px 7px 6px 7px;
}

.badge {
  position: absolute;
  width: 34px;
  height: 34px;
  box-sizing: border-box;
  border-radius: 50%;
  background: #fff;
  border: 1.500px solid #f00;
  box-shadow: 0 0 0 3px #fff, 0 1px 6px 3px rgba(0, 0, 0, 0.25);
  display: flex;
  align-items: center;
  justify-content: center;
  color: #f00;
  font-family: Inter, "Liberation Sans", sans-serif;
  font-weight: 800;
  font-size: 30px;
  line-height: 1;
}

.b9 {
  left: 119px;
  top: 93px;
}

.b10 {
  left: 437px;
  top: 51px;
  letter-spacing: -2.5px;
}
</style>
